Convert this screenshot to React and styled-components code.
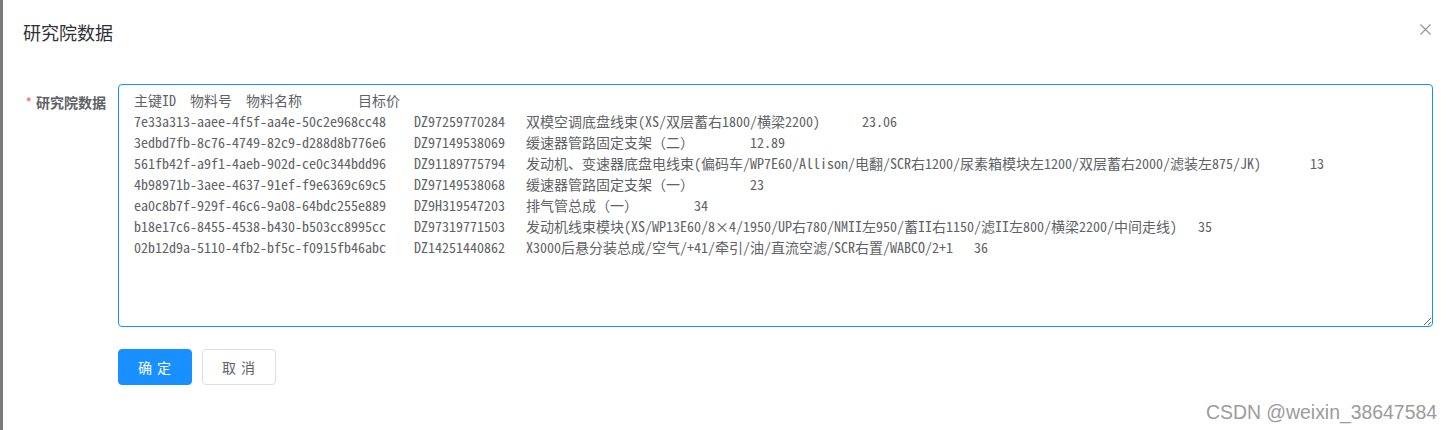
import styled, { createGlobalStyle } from "styled-components";

const GlobalStyle = createGlobalStyle`
  html, body {
    margin: 0;
    padding: 0;
    background: #fff;
  }
  body {
    font-family: "Noto Sans CJK SC", "Liberation Sans", sans-serif;
  }
`;

// 研究院原始数据（制表符分隔）
const rows = [
  "主键ID\t物料号\t物料名称\t目标价",
  "7e33a313-aaee-4f5f-aa4e-50c2e968cc48\tDZ97259770284\t双模空调底盘线束(XS/双层蓄右1800/横梁2200)\t23.06",
  "3edbd7fb-8c76-4749-82c9-d288d8b776e6\tDZ97149538069\t缓速器管路固定支架（二）\t12.89",
  "561fb42f-a9f1-4aeb-902d-ce0c344bdd96\tDZ91189775794\t发动机、变速器底盘电线束(偏码车/WP7E60/Allison/电翻/SCR右1200/尿素箱模块左1200/双层蓄右2000/滤装左875/JK)\t13",
  "4b98971b-3aee-4637-91ef-f9e6369c69c5\tDZ97149538068\t缓速器管路固定支架（一）\t23",
  "ea0c8b7f-929f-46c6-9a08-64bdc255e889\tDZ9H319547203\t排气管总成（一）\t34",
  "b18e17c6-8455-4538-b430-b503cc8995cc\tDZ97319771503\t发动机线束模块(XS/WP13E60/8×4/1950/UP右780/NMII左950/蓄II右1150/滤II左800/横梁2200/中间走线)\t35",
  "02b12d9a-5110-4fb2-bf5c-f0915fb46abc\tDZ14251440862\tX3000后悬分装总成/空气/+41/牵引/油/直流空滤/SCR右置/WABCO/2+1\t36",
];

const App = () => {
  return (
    <Page>
      <GlobalStyle />
      <Dialog>
        <Header>
          <Title>研究院数据</Title>
          <CloseBtn aria-label="close">
            <svg width="11" height="11" viewBox="0 0 11 11">
              <path d="M0.5 0.5 L10.5 10.5 M10.5 0.5 L0.5 10.5" stroke="#909399" strokeWidth="1.1" />
            </svg>
          </CloseBtn>
        </Header>
        <Body>
          <FormItem>
            <Label required>研究院数据</Label>
            <Content>
              <TextArea
                rows={11}
                wrap="off"
                spellCheck={false}
                defaultValue={rows.join("\n")}
              />
            </Content>
          </FormItem>
          <FormItem>
            <Label />
            <Content>
              <Button primary>确 定</Button>
              <Button>取 消</Button>
            </Content>
          </FormItem>
        </Body>
      </Dialog>
      <Watermark>CSDN @weixin_38647584</Watermark>
    </Page>
  );
};

const Page = styled.div`
  position: relative;
  width: 1453px;
  height: 430px;
  overflow: hidden;
  background: #fff;
  border-left: 3px solid #7a7a7a;
  box-sizing: border-box;
`;

const Dialog = styled.div`
  display: flex;
  flex-direction: column;
`;

const Header = styled.div`
  display: flex;
  align-items: center;
  justify-content: space-between;
  padding: 20px 20px 10px;
  height: 24px;
`;

const Title = styled.span`
  font-size: 18px;
  line-height: 24px;
  color: #303133;
  margin-top: -1px;
`;

const CloseBtn = styled.button`
  border: 0;
  background: none;
  padding: 0;
  margin-right: 2px;
  margin-top: -6px;
  display: flex;
  cursor: pointer;
`;

const Body = styled.div`
  padding: 30px 20px 0 0;
  display: flex;
  flex-direction: column;
  gap: 22px;
`;

const FormItem = styled.div`
  display: flex;
`;

const Label = styled.label`
  width: 115px;
  flex-shrink: 0;
  box-sizing: border-box;
  padding-right: 12px;
  text-align: right;
  font-size: 14px;
  font-weight: 700;
  line-height: 36px;
  color: #606266;

  &::before {
    content: ${(p) => (p.required ? '"*"' : "none")};
    color: #f56c6c;
    margin-right: 4px;
    font-weight: 400;
  }
`;

const Content = styled.div`
  flex: 1;
  display: flex;
  gap: 10px;
`;

const TextArea = styled.textarea`
  width: 100%;
  box-sizing: border-box;
  padding: 5px 15px;
  border: 1px solid #1890ff;
  border-radius: 4px;
  outline: none;
  resize: vertical;
  font-family: "Noto Sans Mono CJK SC", "Noto Sans CJK SC", monospace;
  font-size: 14px;
  line-height: 21px;
  tab-size: 56px;
  color: #606266;
  white-space: pre;
  overflow: hidden;
`;

const Button = styled.button`
  height: 36px;
  width: 74px;
  box-sizing: border-box;
  border-radius: 4px;
  font-family: "Noto Sans CJK SC", sans-serif;
  font-size: 14px;
  letter-spacing: 1px;
  cursor: pointer;
  border: 1px solid ${(p) => (p.primary ? "#1890ff" : "#dcdfe6")};
  background: ${(p) => (p.primary ? "#1890ff" : "#fff")};
  color: ${(p) => (p.primary ? "#fff" : "#606266")};
`;

const Watermark = styled.div`
  position: absolute;
  right: 16px;
  bottom: 6px;
  font-family: "Liberation Sans", Arial, sans-serif;
  font-size: 19.4px;
  color: #9b9b9b;
  text-shadow: 0 0 1px rgba(255, 255, 255, 0.8);
`;

export default App;
